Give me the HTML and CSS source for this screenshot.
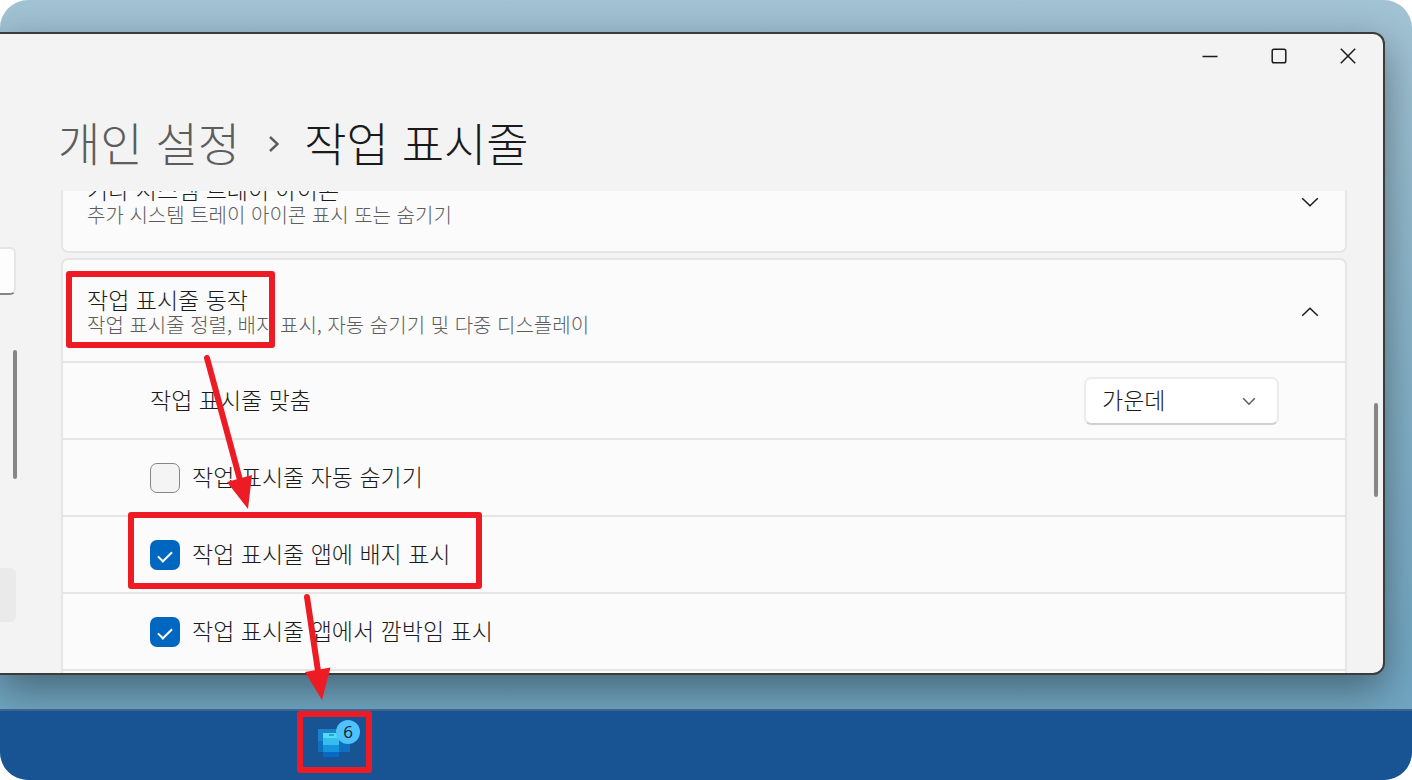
FILE: index.html
```html
<!DOCTYPE html>
<html lang="ko">
<head>
    <meta charset="UTF-8">
    <meta name="viewport" content="width=device-width, initial-scale=1.0">
    <title>작업 표시줄</title>
    <link rel="stylesheet" href="styles.css">
</head>
<body>
    <div class="desktop">
        <div class="window">
            <div class="titlebar">
                <button type="button" aria-label="최소화">
                    <svg width="16" height="16" viewBox="0 0 16 16"><path d="M0.5 8.5h15"/></svg>
                </button>
                <button type="button" aria-label="최대화">
                    <svg width="16" height="16" viewBox="0 0 16 16"><rect x="1.2" y="1.2" width="13.6" height="13.6" rx="1.8"/></svg>
                </button>
                <button type="button" aria-label="닫기">
                    <svg width="16" height="16" viewBox="0 0 16 16"><path d="M0.8 0.8l14.4 14.4M15.2 0.8L0.8 15.2"/></svg>
                </button>
            </div>

            <div class="body">
                <div class="sidebar">
                    <input type="text" class="search" aria-label="설정 검색">
                    <div class="thumb"></div>
                    <div class="nav-item"></div>
                </div>

                <main>
                    <h1>
                        <a href="#">개인 설정</a>
                        <svg width="12" height="18" viewBox="0 0 12 18"><path d="M2 2l7.500 7L2 16"/></svg>
                        <span>작업 표시줄</span>
                    </h1>

                    <div class="scroll">
                        <div class="list">
                            <section class="card">
                                <div class="card-head">
                                    <div>
                                        <h2>기타 시스템 트레이 아이콘</h2>
                                        <p>추가 시스템 트레이 아이콘 표시 또는 숨기기</p>
                                    </div>
                                    <button type="button" aria-label="펼치기">
                                        <svg width="18" height="10" viewBox="0 0 18 10"><path d="M1.2 1.2L9 8.8l7.8-7.6"/></svg>
                                    </button>
                                </div>
                            </section>

                            <section class="card">
                                <div class="card-head">
                                    <div>
                                        <h2>작업 표시줄 동작</h2>
                                        <p>작업 표시줄 정렬, 배지 표시, 자동 숨기기 및 다중 디스플레이</p>
                                    </div>
                                    <button type="button" aria-label="접기">
                                        <svg width="18" height="10" viewBox="0 0 18 10"><path d="M1.2 8.8L9 1.2l7.8 7.6"/></svg>
                                    </button>
                                </div>
                                <div class="row">
                                    <label for="align">작업 표시줄 맞춤</label>
                                    <div class="select">
                                        <select id="align">
                                            <option>가운데</option>
                                            <option>왼쪽</option>
                                        </select>
                                        <svg width="14" height="9" viewBox="0 0 14 9"><path d="M1.2 1.2L7 7.2l5.8-6"/></svg>
                                    </div>
                                </div>
                                <div class="row">
                                    <input type="checkbox" id="autohide">
                                    <label for="autohide">작업 표시줄 자동 숨기기</label>
                                </div>
                                <div class="row">
                                    <input type="checkbox" id="badge" checked>
                                    <label for="badge">작업 표시줄 앱에 배지 표시</label>
                                </div>
                                <div class="row">
                                    <input type="checkbox" id="flash" checked>
                                    <label for="flash">작업 표시줄 앱에서 깜박임 표시</label>
                                </div>
                                <div class="row"></div>
                            </section>
                        </div>
                    </div>
                </main>
                <div class="page-thumb"></div>
            </div>
        </div>

        <div class="taskbar">
            <button type="button" class="app" aria-label="휴대폰과 연결">
                <svg width="34" height="32" viewBox="0 0 34 32">
                    <rect x="1" y="2" width="32" height="23" rx="1" fill="#0f71bd"/>
                    <rect x="1" y="2" width="32" height="12" rx="1" fill="#1a82cb"/>
                    <rect x="6" y="6" width="16" height="24" rx="1" fill="#0669c4"/>
                    <rect x="6" y="6" width="16" height="19" fill="#1593dc"/>
                    <rect x="6" y="6" width="16" height="12" fill="#35bdf0"/>
                    <rect x="6" y="6" width="16" height="5" rx="1" fill="#4fdcf5"/>
                    <path d="M12 8h5" stroke="#1a8fb8" stroke-width="1.4"/>
                </svg>
                <span class="badge">6</span>
            </button>
        </div>

        <!-- red boxes and arrows -->
        <svg class="marks" width="1412" height="780" viewBox="0 0 1412 780">
            <g fill="none" stroke="#ed1c24" stroke-width="6" stroke-linejoin="round" stroke-linecap="round">
                <rect x="69" y="274" width="203" height="71"/>
                <rect x="131" y="515" width="348" height="71"/>
                <rect x="300" y="714" width="69" height="56"/>
                <path d="M207 358l33 122M307 597l11 74"/>
            </g>
            <path fill="#ed1c24" d="M227 482l25-7-4 34zM305 672l25.500-4.500-8.500 32.500z"/>
        </svg>
    </div>
</body>
</html>
```

FILE: styles.css
```css
* {
    box-sizing: border-box;
}
body {
    margin: 0;
    background: #fff;
    color: #1a1a1a;
    font-family: "Noto Sans CJK KR", sans-serif;
    font-weight: 300;
    font-size: 23px;
}
h1, h2, p {
    margin: 0;
    font-weight: 300;
}
svg {
    display: block;
    fill: none;
    stroke: #1a1a1a;
    stroke-width: 1.5;
}
button {
    padding: 0;
    border: 0;
    background: none;
}
.desktop {
    position: relative;
    display: flex;
    flex-direction: column;
    height: 100vh;
    border-radius: 28px;
    overflow: hidden;
    background: linear-gradient(#a2c3d4, #84b0c6 50%, #6ba3c0);
}

/* settings window */
.window {
    flex: 1;
    min-height: 0;
    display: flex;
    flex-direction: column;
    margin: 32px 27px 34px 0;
    border: 2px solid #3b3b3b;
    border-left: 0;
    border-radius: 0 12px 12px 0;
    overflow: hidden;
    background: #f3f3f3;
    box-shadow: 0 14px 40px rgba(0, 0, 0, 0.4);
}
.titlebar {
    display: flex;
    justify-content: flex-end;
    padding-right: 1px;
}
.titlebar button {
    display: flex;
    align-items: center;
    justify-content: center;
    width: 69px;
    height: 44px;
}
.body {
    flex: 1;
    min-height: 0;
    display: flex;
}
.sidebar {
    width: 61px;
    padding-top: 169px;
}
.search {
    display: block;
    width: 16px;
    height: 48px;
    border: 2px solid #e5e5e5;
    border-left: 0;
    border-bottom-color: #868686;
    border-radius: 0 6px 6px 0;
    background: #fdfdfd;
}
.thumb {
    width: 4px;
    height: 129px;
    margin: 55px 0 89px 13px;
    border-radius: 2px;
    background: #868686;
}
.nav-item {
    width: 16px;
    height: 54px;
    border-radius: 0 6px 6px 0;
    background: #eaeaea;
}
main {
    flex: 1;
    min-width: 0;
    display: flex;
    flex-direction: column;
}
h1 {
    display: flex;
    align-items: center;
    height: 113px;
    margin-left: -3px;
    padding-top: 18px;
    font-size: 46px;
    line-height: 60px;
}
h1 a {
    color: #5d5d5d;
    text-decoration: none;
}
h1 a, h1 span {
    padding-bottom: 6px;
}
h1 svg {
    margin: 0 24px 0 28px;
    stroke: #5d5d5d;
    stroke-width: 2.4;
}
.scroll {
    flex: 1;
    min-height: 0;
    overflow: hidden;
}
.list {
    display: flex;
    flex-direction: column;
    gap: 5px;
    margin-top: -43px;
}
.card {
    border: 2px solid #e5e5e5;
    border-radius: 7px;
    background: #fbfbfb;
}
.card-head {
    display: flex;
    align-items: center;
    justify-content: space-between;
    height: 101px;
    padding: 0 26px 0 24px;
}
.card-head button {
    padding-top: 2px;
}
h2 {
    font-size: 23px;
    line-height: 28px;
}
.card-head p {
    color: #5d5d5d;
    font-size: 20px;
    line-height: 24px;
}
.row {
    display: flex;
    align-items: center;
    height: 77px;
    padding: 0 66px 0 87px;
    border-top: 2px solid #e5e5e5;
}
.row label {
    padding-bottom: 4px;
}
.row input {
    appearance: none;
    width: 30px;
    height: 30px;
    margin: 0 12px 0 0;
    border: 1px solid #868686;
    border-radius: 7px;
    background: #f4f4f4;
}
.row input:checked {
    border: 0;
    background: #0067c0;
}
.row input:checked::after {
    content: "";
    display: block;
    width: 6px;
    height: 12px;
    margin: 8px 0 0 11px;
    border: solid #fff;
    border-width: 0 2px 2px 0;
    transform: rotate(45deg);
}
.select {
    position: relative;
    margin-left: auto;
}
.select select {
    appearance: none;
    display: block;
    width: 195px;
    height: 48px;
    padding: 0 16px 3px;
    border: 2px solid #ececec;
    border-bottom-color: #d0d0d0;
    border-radius: 7px;
    background: #fff;
    color: #1a1a1a;
    font: inherit;
}
.select svg {
    position: absolute;
    right: 23px;
    top: 20px;
    stroke: #5d5d5d;
    pointer-events: none;
}
.page-thumb {
    width: 4px;
    height: 94px;
    margin: 325px 5px 0 27px;
    border-radius: 2px;
    background: #868686;
}

/* taskbar */
.taskbar {
    position: relative;
    display: flex;
    align-items: center;
    height: 71px;
    padding: 0 0 6px 317px;
    border-top: 2px solid #3d638f;
    background: #185394;
}
.app {
    position: relative;
}
.app svg {
    stroke: none;
}
.badge {
    position: absolute;
    top: -7px;
    left: 19px;
    width: 24px;
    height: 24px;
    border-radius: 50%;
    background: #4cc2ff;
    color: #1a1a1a;
    font-family: "Open Sans", sans-serif;
    font-size: 17px;
    font-weight: 400;
    line-height: 24px;
    text-align: center;
}
.marks {
    position: absolute;
    top: 0;
    left: 0;
    stroke: none;
    pointer-events: none;
}
```
